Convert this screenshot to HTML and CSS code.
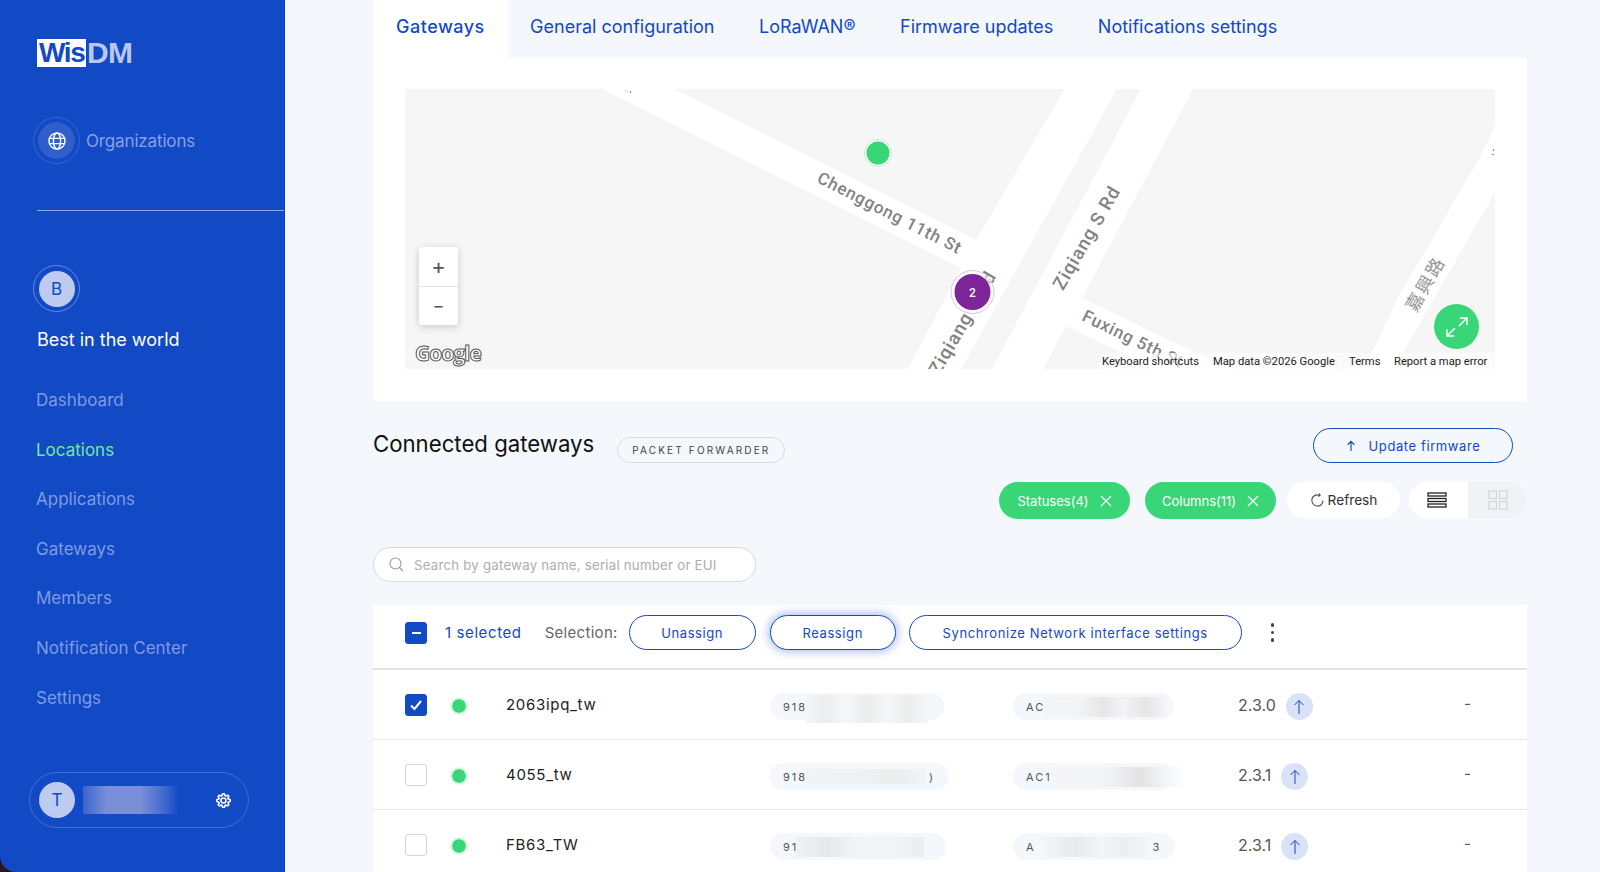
FILE: index.html
```html
<!DOCTYPE html>
<html lang="en">
<head>
    <meta charset="UTF-8">
    <meta name="viewport" content="width=device-width, initial-scale=1.0">
    <title>WisDM - Gateways</title>
    <link rel="stylesheet" href="styles.css">
</head>
<body>
<div class="app">
    <aside class="sidebar">
        <div class="logo"><span class="logo-wis">Wis</span><span class="logo-dm">DM</span></div>

        <div class="org-link">
            <span class="halo halo-dim">
                <svg width="20" height="20" viewBox="0 0 20 20" fill="none" stroke="#fff" stroke-width="1.4">
                    <circle cx="10" cy="10" r="8"/>
                    <ellipse cx="10" cy="10" rx="3.6" ry="8"/>
                    <path d="M2.4 7.4h15.2M2.4 12.6h15.2"/>
                </svg>
            </span>
            <span class="org-label">Organizations</span>
        </div>

        <div class="side-rule"></div>

        <span class="halo halo-org"><span class="avatar">B</span></span>
        <div class="org-name">Best in the world</div>

        <nav class="side-nav">
            <a href="#">Dashboard</a>
            <a href="#" class="active">Locations</a>
            <a href="#">Applications</a>
            <a href="#">Gateways</a>
            <a href="#">Members</a>
            <a href="#">Notification Center</a>
            <a href="#">Settings</a>
        </nav>

        <div class="user-pill">
            <span class="avatar">T</span>
            <span class="user-smudge"></span>
            <svg class="gear" width="15" height="15" viewBox="0 0 24 24" fill="none" stroke="#fff" stroke-width="2.6">
                <circle cx="12" cy="12" r="4"/>
                <path d="M19.4 15a1.65 1.65 0 0 0 .33 1.82l.06.06a2 2 0 0 1 0 2.83 2 2 0 0 1-2.83 0l-.06-.06a1.65 1.65 0 0 0-1.82-.33 1.65 1.65 0 0 0-1 1.51V21a2 2 0 0 1-2 2 2 2 0 0 1-2-2v-.09A1.65 1.65 0 0 0 9 19.4a1.65 1.65 0 0 0-1.82.33l-.06.06a2 2 0 0 1-2.83 0 2 2 0 0 1 0-2.83l.06-.06a1.65 1.65 0 0 0 .33-1.82 1.65 1.65 0 0 0-1.51-1H3a2 2 0 0 1-2-2 2 2 0 0 1 2-2h.09A1.65 1.65 0 0 0 4.6 9a1.65 1.65 0 0 0-.33-1.82l-.06-.06a2 2 0 0 1 0-2.83 2 2 0 0 1 2.83 0l.06.06a1.65 1.65 0 0 0 1.82.33H9a1.65 1.65 0 0 0 1-1.51V3a2 2 0 0 1 2-2 2 2 0 0 1 2 2v.09a1.65 1.65 0 0 0 1 1.51 1.65 1.65 0 0 0 1.82-.33l.06-.06a2 2 0 0 1 2.83 0 2 2 0 0 1 0 2.83l-.06.06a1.65 1.65 0 0 0-.33 1.82V9a1.65 1.65 0 0 0 1.51 1H21a2 2 0 0 1 2 2 2 2 0 0 1-2 2h-.09a1.65 1.65 0 0 0-1.51 1z"/>
            </svg>
        </div>
    </aside>

    <main class="main">
        <div class="tabs">
            <a href="#" class="tab active">Gateways</a>
            <a href="#" class="tab">General configuration</a>
            <a href="#" class="tab">LoRaWAN®</a>
            <a href="#" class="tab">Firmware updates</a>
            <a href="#" class="tab">Notifications settings</a>
        </div>

        <section class="map-panel">
            <div class="map">
                <svg class="map-canvas" width="1090" height="280" viewBox="405 89 1090 280">
                    <!-- roads, in page coordinates -->
                    <g fill="#fff">
                        <polygon points="602,89 674,89 976,240 1065,89 1117,89 961,369 908,369 961,268"/>
                        <polygon points="1141,89 1193,89 1082,298 1196,353 1229,369 1155,369 1066,326 1043,369 992,369"/>
                        <polygon points="1495,127 1475,167 1461,188 1453,203 1431,242 1400,293 1384,327 1372,353 1363,369 1395,369 1403,353 1495,192"/>
                    </g>
                    <g class="road-label">
                        <text transform="translate(887 218) rotate(27)" text-anchor="middle">Chenggong 11th St</text>
                        <text class="road-big" transform="translate(1092 241) rotate(-60)" text-anchor="middle">Ziqiang S Rd</text>
                        <text class="road-big" transform="translate(968 326) rotate(-60)" text-anchor="middle">Ziqiang S Rd</text>
                        <text transform="translate(1081 320) rotate(26)">Fuxing 5th St</text>
                        <text class="road-cjk" transform="translate(1431 287) rotate(-60)" text-anchor="middle">嘉興路</text>
                    </g>
                    <path class="road-bits" d="M626 90.5l1 1M630 91l1 2M1494 149l-1 2M1492 154l2 1"/>

                    <circle cx="878" cy="153" r="13.5" fill="#fff" stroke="#bdeccd"/>
                    <circle cx="878" cy="153" r="11.5" fill="#38d676"/>
                    <circle cx="972.5" cy="292" r="21.5" fill="#fff" fill-opacity=".55" stroke="#dcc3e6"/>
                    <circle cx="972.5" cy="292" r="18" fill="#7d2599"/>
                    <text class="cluster-count" x="972.5" y="296.5" text-anchor="middle">2</text>

                    <g class="attribution-bg">
                        <rect x="1100" y="353" width="106" height="16"/>
                        <rect x="1207" y="353" width="136" height="16"/>
                        <rect x="1344" y="353" width="43" height="16"/>
                        <rect x="1388" y="353" width="107" height="16"/>
                    </g>
                    <g class="attribution">
                        <text x="1102" y="365">Keyboard shortcuts</text>
                        <text x="1213" y="365">Map data ©2026 Google</text>
                        <text x="1349" y="365">Terms</text>
                        <text x="1394" y="365">Report a map error</text>
                    </g>
                    <text class="google" x="415" y="361">Google</text>
                </svg>

                <div class="zoom-ctrl">
                    <button>+</button>
                    <button class="zoom-out">−</button>
                </div>
                <button class="expand-btn">
                    <svg width="24" height="24" viewBox="0 0 24 24" fill="none" stroke="#fff" stroke-width="1.5">
                        <path d="M15 3h7v7M22 3l-8 8M9 21H2v-7M2 21l8-8"/>
                    </svg>
                </button>
            </div>
        </section>

        <div class="section-head">
            <div class="title-wrap">
                <h2>Connected gateways</h2>
                <span class="badge">PACKET FORWARDER</span>
            </div>
            <button class="btn btn-update">
                <svg width="10" height="12" viewBox="0 0 12 14" fill="none" stroke="#1249c4" stroke-width="1.4">
                    <path d="M6 13V1.5M2 5.5l4-4 4 4"/>
                </svg>
                Update firmware
            </button>
        </div>

        <div class="filters">
            <span class="chip chip-a">Statuses(4)
                <svg width="12" height="12" viewBox="0 0 12 12" stroke="#fff" stroke-width="1.2"><path d="M1 1l10 10M11 1L1 11"/></svg>
            </span>
            <span class="chip chip-b">Columns(11)
                <svg width="12" height="12" viewBox="0 0 12 12" stroke="#fff" stroke-width="1.2"><path d="M1 1l10 10M11 1L1 11"/></svg>
            </span>
            <span class="refresh">
                <svg width="15" height="15" viewBox="0 0 15 15" fill="none" stroke="#555" stroke-width="1.2">
                    <path d="M13 7.5A5.6 5.6 0 1 1 9.6 2.3M9.4 .4l.6 2.2-2.2.7"/>
                </svg>
                Refresh
            </span>
            <div class="view-toggle">
                <span class="view-on">
                    <svg width="20" height="16" viewBox="0 0 20 16" fill="none" stroke="#222" stroke-width="1.3">
                        <rect x="1" y="1" width="18" height="3"/>
                        <rect x="1" y="6.5" width="18" height="3"/>
                        <rect x="1" y="12" width="18" height="3"/>
                    </svg>
                </span>
                <span class="view-off">
                    <svg width="20" height="20" viewBox="0 0 20 20" fill="none" stroke="#d4d6d9" stroke-width="1.3">
                        <rect x="1" y="1" width="7.5" height="7.5"/>
                        <rect x="11.5" y="1" width="7.5" height="7.5"/>
                        <rect x="1" y="11.5" width="7.5" height="7.5"/>
                        <rect x="11.5" y="11.5" width="7.5" height="7.5"/>
                    </svg>
                </span>
            </div>
        </div>

        <div class="search">
            <svg width="15" height="15" viewBox="0 0 15 15" fill="none" stroke="#9a9a9a" stroke-width="1.1">
                <circle cx="6.5" cy="6.5" r="5.5"/>
                <path d="M10.5 10.5l3.5 3.5"/>
            </svg>
            <span>Search by gateway name, serial number or EUI</span>
        </div>

        <div class="table">
            <div class="selection-bar">
                <span class="check checked"><span class="minus"></span></span>
                <span class="sel-count">1 selected</span>
                <span class="sel-label">Selection:</span>
                <button class="btn btn-unassign">Unassign</button>
                <button class="btn btn-reassign">Reassign</button>
                <button class="btn btn-sync">Synchronize Network interface settings</button>
                <span class="kebab"><i></i><i></i><i></i></span>
            </div>

            <div class="row">
                <span class="check checked">
                    <svg width="14" height="12" viewBox="0 0 14 12" fill="none" stroke="#fff" stroke-width="2"><path d="M2 6.5l3.5 3.5L12 2"/></svg>
                </span>
                <span class="dot"></span>
                <span class="gw-name">2063ipq_tw</span>
                <span class="pill pill-1a">918<span class="smudge sm-1a"></span></span>
                <span class="pill pill-1b">AC<span class="smudge sm-1b"></span></span>
                <span class="version">2.3.0<span class="up"><svg width="12" height="16" viewBox="0 0 12 16" fill="none" stroke="#1249c4" stroke-width="1"><path d="M6 15V1.5M1.5 6L6 1.5 10.5 6"/></svg></span></span>
                <span class="dash">-</span>
            </div>
            <div class="row">
                <span class="check"></span>
                <span class="dot"></span>
                <span class="gw-name">4055_tw</span>
                <span class="pill pill-2a">918<span class="smudge sm-2a"></span>)</span>
                <span class="pill pill-2b">AC1<span class="smudge sm-2b"></span></span>
                <span class="version">2.3.1<span class="up"><svg width="12" height="16" viewBox="0 0 12 16" fill="none" stroke="#1249c4" stroke-width="1"><path d="M6 15V1.5M1.5 6L6 1.5 10.5 6"/></svg></span></span>
                <span class="dash">-</span>
            </div>
            <div class="row">
                <span class="check"></span>
                <span class="dot"></span>
                <span class="gw-name">FB63_TW</span>
                <span class="pill pill-3a">91<span class="smudge sm-3a"></span></span>
                <span class="pill pill-3b">A<span class="smudge sm-3b"></span>3</span>
                <span class="version">2.3.1<span class="up"><svg width="12" height="16" viewBox="0 0 12 16" fill="none" stroke="#1249c4" stroke-width="1"><path d="M6 15V1.5M1.5 6L6 1.5 10.5 6"/></svg></span></span>
                <span class="dash">-</span>
            </div>
        </div>
    </main>
</div>
</body>
</html>
```

FILE: styles.css
```css
* {
    box-sizing: border-box;
}

html, body {
    height: 100%;
    margin: 0;
    overflow: hidden;
    background: #2c1622;
}

body {
    font-family: Inter, 'Noto Sans', Arial, sans-serif;
    color: #222;
}

a {
    text-decoration: none;
}

button {
    font-family: inherit;
    cursor: pointer;
}

.app {
    display: flex;
    height: 872px;
    overflow: hidden;
}

/* sidebar */
.sidebar {
    width: 285px;
    flex: none;
    background: #1249c4;
    border-right: 1px solid #0a3bd6;
    border-bottom-left-radius: 16px;
    padding-top: 39px;
}

.logo {
    display: flex;
    margin-left: 37px;
    height: 28px;
    font-family: 'Liberation Sans', Arial, sans-serif;
    font-weight: 700;
    line-height: 28px;
}

.logo-wis {
    width: 49px;
    background: #fff;
    color: #1249c4;
    padding-left: 2px;
    font-size: 28px;
    letter-spacing: -1.4px;
}

.logo-dm {
    color: #b9c8ef;
    padding-left: 1px;
    font-size: 30px;
    letter-spacing: -.6px;
}

.halo {
    display: flex;
    align-items: center;
    justify-content: center;
    width: 47px;
    height: 47px;
    border-radius: 50%;
    flex: none;
}

.halo-dim {
    border: 1px solid rgba(255, 255, 255, .15);
    background: radial-gradient(circle, rgba(255, 255, 255, .12) 18px, transparent 18.5px);
}

.halo-org {
    margin: 54px 0 0 33px;
    border: 1px solid rgba(255, 255, 255, .35);
}

.avatar {
    display: flex;
    align-items: center;
    justify-content: center;
    width: 36px;
    height: 36px;
    border-radius: 50%;
    background: #bccbef;
    color: #1249c4;
    font-size: 17px;
    flex: none;
}

.org-link {
    display: flex;
    align-items: center;
    gap: 6px;
    margin: 50px 0 0 33px;
}

.org-label {
    font-size: 17px;
    letter-spacing: -.15px;
    color: #87a1e6;
}

.side-rule {
    height: 1px;
    margin: 46px 0 0 37px;
    background: rgba(255, 255, 255, .5);
}

.org-name {
    margin: 16px 0 0 37px;
    font-size: 18px;
    line-height: 24px;
    color: #fff;
}

.side-nav {
    display: flex;
    flex-direction: column;
    margin: 24px 0 0 36px;
}

.side-nav a {
    height: 49.6px;
    line-height: 49.6px;
    font-size: 17px;
    color: #7f9be4;
}

.side-nav a.active {
    color: #6fe9a4;
}

.user-pill {
    display: flex;
    align-items: center;
    width: 220px;
    height: 56px;
    margin: 49px 0 0 29px;
    padding-left: 9px;
    border: 1px solid rgba(255, 255, 255, .2);
    border-radius: 28px;
}

.user-smudge {
    width: 96px;
    height: 28px;
    margin-left: 8px;
    background: linear-gradient(90deg, #3b63cd, #7b8fd9 25%, #7b8fd9 60%, #4168cf 85%, #1249c4);
}

.gear {
    margin-left: 37px;
}

/* tabs */
.main {
    flex: 1;
    padding: 0 73px 0 88px;
    background: #f4f7fb;
    min-width: 0;
}

.tabs {
    display: flex;
    height: 58px;
}

.tab {
    display: flex;
    align-items: center;
    padding: 0 22.3px 5px;
    font-size: 18px;
    color: #1249c4;
}

.tab.active {
    background: #fff;
    font-weight: 500;
    letter-spacing: .5px;
    padding: 0 23px 5px;
}

/* map */
.map-panel {
    background: #fff;
    padding: 31px 32px 32px;
    height: 343px;
}

.map {
    position: relative;
    height: 280px;
    background: #f6f6f6;
    overflow: hidden;
}

.map-canvas {
    display: block;
}

.road-label text {
    font-family: Roboto, sans-serif;
    font-weight: 500;
    font-size: 17px;
    letter-spacing: .8px;
    fill: #828282;
}

.road-label .road-big {
    font-size: 18.5px;
    letter-spacing: 1px;
}

.road-label .road-cjk {
    font-family: 'Noto Sans CJK TC', sans-serif;
    font-weight: 400;
    font-size: 18px;
    letter-spacing: 2px;
    fill: #969696;
}

.road-bits {
    stroke: #777;
    fill: none;
}

.cluster-count {
    font-family: Roboto, sans-serif;
    font-size: 12px;
    font-weight: 500;
    fill: #fff;
}

.attribution-bg {
    fill: #fff;
    fill-opacity: .6;
}

.attribution text {
    font-family: Roboto, sans-serif;
    font-size: 11.2px;
    fill: #222;
}

.google {
    font-family: 'Open Sans', sans-serif;
    font-weight: 700;
    font-size: 21px;
    letter-spacing: -1px;
    fill: #fff;
    stroke: #555;
    stroke-width: 1;
}

.zoom-ctrl {
    position: absolute;
    left: 14px;
    top: 158px;
    width: 39px;
    background: #fff;
    border-radius: 3px;
    box-shadow: 0 2px 8px rgba(0, 0, 0, .18);
}

.zoom-ctrl button {
    display: block;
    width: 100%;
    height: 39px;
    padding: 0 0 2px;
    border: none;
    background: none;
    font-size: 22px;
    color: #555;
}

.zoom-ctrl .zoom-out {
    border-top: 1px solid #e4e4e4;
    font-size: 18px;
}

.expand-btn {
    position: absolute;
    left: 1029px;
    top: 215px;
    display: flex;
    align-items: center;
    justify-content: center;
    width: 45px;
    height: 45px;
    padding: 0;
    border: none;
    border-radius: 50%;
    background: #38d676;
}

/* section header */
.section-head {
    display: flex;
    justify-content: space-between;
    height: 35px;
    margin: 27px 14px 0 0;
}

.title-wrap {
    display: flex;
    gap: 23px;
}

h2 {
    margin: 0;
    font-size: 22.2px;
    font-weight: 400;
    line-height: 32px;
    color: #111;
}

.badge {
    height: 26px;
    margin-top: 9px;
    padding: 0 14px;
    border: 1px solid #d8dbdf;
    border-radius: 13px;
    font-size: 10px;
    line-height: 24px;
    letter-spacing: 2.15px;
    color: #444;
}

.btn {
    height: 35px;
    padding: 0;
    border: 1.5px solid #1249c4;
    border-radius: 18px;
    background: #fff;
    color: #1249c4;
    font-size: 13px;
    letter-spacing: .6px;
}

.btn-update {
    display: flex;
    align-items: center;
    justify-content: center;
    gap: 13px;
    width: 200px;
    background: #f4f7fb;
}

.filters {
    display: flex;
    justify-content: flex-end;
    align-items: flex-start;
    height: 37px;
    margin-top: 19px;
}

.chip {
    display: flex;
    align-items: center;
    justify-content: center;
    gap: 11px;
    width: 131px;
    height: 37px;
    border-radius: 19px;
    background: #38d676;
    color: #fff;
    font-size: 13px;
}

.chip-a {
    margin-right: 15px;
}

.refresh {
    display: flex;
    align-items: center;
    justify-content: center;
    gap: 3px;
    width: 113px;
    height: 36px;
    margin: 0 9px 0 11px;
    border-radius: 18px;
    background: #fff;
    font-size: 13.7px;
    color: #333;
}

.view-toggle {
    display: flex;
    height: 36px;
    border-radius: 18px;
    overflow: hidden;
}

.view-toggle span {
    display: flex;
    align-items: center;
    justify-content: center;
    width: 59px;
}

.view-on {
    background: #fff;
    padding-right: 4px;
}

.view-off {
    background: #f0f2f5;
}

.search {
    display: flex;
    align-items: center;
    gap: 10px;
    width: 383px;
    height: 35px;
    margin-top: 28px;
    padding-left: 15px;
    border: 1px solid #d9dadd;
    border-radius: 18px;
    background: #fff;
    font-size: 13.3px;
    letter-spacing: .2px;
    color: #aeaeae;
}

/* table */
.table {
    margin-top: 23px;
    background: #fff;
}

.selection-bar {
    display: flex;
    align-items: center;
    height: 65px;
    padding: 0 0 8px 32px;
    border-bottom: 2px solid #e2e3e4;
}

.check {
    display: flex;
    align-items: center;
    justify-content: center;
    width: 22px;
    height: 22px;
    border: 1px solid #d5d6d8;
    border-radius: 3px;
    background: #fff;
}

.check.checked {
    background: #1249c4;
    border-color: #1249c4;
}

.minus {
    width: 9px;
    height: 2px;
    background: #fff;
}

.sel-count {
    margin-left: 18px;
    font-size: 15px;
    letter-spacing: .6px;
    color: #1249c4;
}

.sel-label {
    margin-left: 23px;
    font-size: 15px;
    letter-spacing: .3px;
    color: #666;
}

.btn-unassign {
    width: 127px;
    margin-left: 11px;
}

.btn-reassign {
    width: 126px;
    margin-left: 14px;
    box-shadow: 0 0 8px 2px rgba(18, 73, 196, .35);
}

.btn-sync {
    width: 333px;
    margin-left: 13px;
}

.kebab {
    display: flex;
    flex-direction: column;
    gap: 4px;
    margin-left: 29px;
}

.kebab i {
    width: 3.5px;
    height: 3.5px;
    border-radius: 50%;
    background: #444;
}

.row {
    display: grid;
    grid-template-columns: 45px 56px 264px 243px 225px 226px 1fr;
    align-items: center;
    height: 70px;
    padding-left: 32px;
    border-bottom: 1px solid #e6e7e8;
}

.dot {
    width: 18px;
    height: 18px;
    border: 2.5px solid #d6f6e3;
    border-radius: 50%;
    background: #38d676;
    background-clip: padding-box;
    transform: translateY(1px);
}

.gw-name {
    font-size: 15px;
    letter-spacing: .7px;
    color: #222;
}

.pill {
    display: flex;
    align-items: center;
    height: 27px;
    padding-left: 13px;
    border-radius: 14px;
    background: #f4f7fb;
    font-size: 11px;
    letter-spacing: 2px;
    color: #555;
    white-space: nowrap;
    transform: translateY(2px);
}

.pill-1a { width: 174px; }
.pill-2a { width: 179px; }
.pill-3a { width: 176px; }
.pill-1b { width: 161px; }
.pill-2b { width: 161px; }
.pill-3b { width: 162px; }

.smudge {
    flex: none;
    height: 20px;
}

.sm-1a {
    width: 122px;
    height: 28px;
    margin: 4px 0 0 -1px;
    background: linear-gradient(90deg, #f4f5f6, #ecedee 16%, #f5f6f7 33%, #ebecec 50%, #f5f6f7 66%, #ebecec 84%, #f5f6f8);
}

.sm-2a {
    width: 120px;
    height: 15px;
    margin: 0 3px 0 -1px;
    background: linear-gradient(90deg, #f1f3f4, #eff0f1 50%, #ebecec 75%, #f2f3f5);
}

.sm-3a {
    width: 128px;
    margin-left: -2px;
    background: linear-gradient(90deg, #f0f1f3, #e7e8e9 25%, #f3f4f6 48%, #f2f3f5 80%, #ecedef 95%);
}

.sm-1b {
    width: 122px;
    margin-left: -2px;
    background: linear-gradient(90deg, #f4f5f7, #f2f3f4 30%, #e6e6e7 50%, #f2f3f4 65%, #e6e6e7 85%, #f3f4f5);
}

.sm-2b {
    width: 135px;
    background: linear-gradient(90deg, #f4f6f8, #f2f3f5 40%, #e3e3e4 65%, #f4f5f7 85%, #fff);
}

.sm-3b {
    width: 112px;
    margin: 0 1px 0 4px;
    background: linear-gradient(90deg, #f4f7fb, #e8e9ea 32%, #f3f5f7 55%, #ecedef 75%, #f4f7fb);
}

.version {
    display: flex;
    align-items: center;
    gap: 10px;
    font-size: 16px;
    color: #555;
}

.up {
    display: flex;
    align-items: center;
    justify-content: center;
    width: 27px;
    height: 27px;
    border-radius: 50%;
    background: #d9e2f6;
    transform: translateY(2px);
}

.dash {
    font-size: 15px;
    color: #555;
    margin-top: -3px;
}
```
